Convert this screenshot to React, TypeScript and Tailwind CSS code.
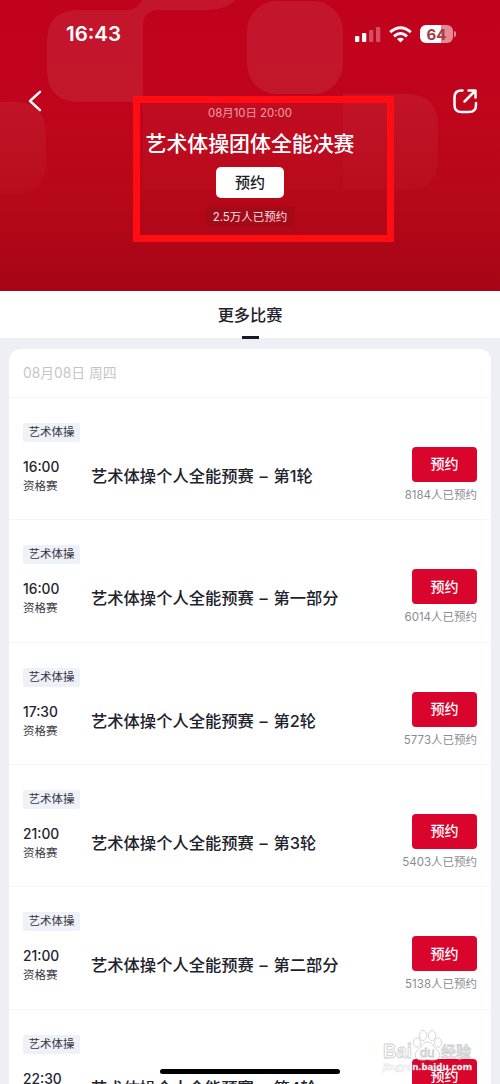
const matches = [
  { time: '16:00', stage: '资格赛', title: '艺术体操个人全能预赛 – 第1轮', booked: '8184人已预约' },
  { time: '16:00', stage: '资格赛', title: '艺术体操个人全能预赛 – 第一部分', booked: '6014人已预约' },
  { time: '17:30', stage: '资格赛', title: '艺术体操个人全能预赛 – 第2轮', booked: '5773人已预约' },
  { time: '21:00', stage: '资格赛', title: '艺术体操个人全能预赛 – 第3轮', booked: '5403人已预约' },
  { time: '21:00', stage: '资格赛', title: '艺术体操个人全能预赛 – 第二部分', booked: '5138人已预约' },
  { time: '22:30', stage: '资格赛', title: '艺术体操个人全能预赛 – 第4轮', booked: '4986人已预约' },
];

type Match = (typeof matches)[number];

// Rounded tiles behind the header
function HeaderPattern() {
  return (
    <svg className="absolute inset-0" width="500" height="291" viewBox="0 0 500 291">
      <defs>
        <linearGradient id="tile" x1="0" y1="94" x2="0" y2="194" gradientUnits="userSpaceOnUse">
          <stop offset="0" stopColor="#c8525a" stopOpacity=".2" />
          <stop offset="1" stopColor="#c8525a" stopOpacity=".06" />
        </linearGradient>
      </defs>
      <g fill="#c8525a" fillOpacity=".24">
        <path d="M78 10H126Q138 10 142 0V-4H238Q230 10 206 10H160Q143 10 143 26V102H80Q47 102 47 70V42Q47 10 78 10Z" />
        <rect x="247" y="1" width="96" height="93" rx="30" />
      </g>
      <g fill="url(#tile)">
        <path d="M343 94H406Q438 94 438 126V158Q438 190 406 190H343Z" />
        <path d="M-5 102H14Q46 102 46 134V162Q46 194 14 194H-5Z" />
        <path d="M143 102H343V190H143Z" opacity=".5" />
      </g>
    </svg>
  );
}

function StatusBar() {
  return (
    <div className="flex h-[68px] items-center justify-between pl-[66px] pr-[44px]">
      <span className="font-['Inter'] text-[20.5px] font-semibold leading-6">16:43</span>
      <div className="flex items-center">
        <svg width="26" height="17" viewBox="0 0 26 17" fill="#fff">
          <rect x="0" y="10" width="4.3" height="6" rx="1" />
          <rect x="7" y="7" width="4.3" height="9" rx="1" />
          <rect x="14" y="4" width="4.3" height="12" rx="1" opacity=".3" />
          <rect x="21" y="1" width="4.3" height="15" rx="1" opacity=".3" />
        </svg>
        <svg className="ml-2" width="23" height="17" viewBox="0 0 23 17" fill="none" stroke="#fff" strokeWidth="2.9">
          <path d="M1.2 6.2Q11.5 -2.7 21.8 6.2" />
          <path d="M5 10.3Q11.5 4.8 18 10.3" />
          <path d="M8 13Q11.5 10.3 15 13L11.5 16.6Z" fill="#fff" stroke="none" />
        </svg>
        <div className="ml-2 flex h-[18px] w-[33px] items-center justify-center rounded-[6px] bg-[linear-gradient(90deg,#fff_64%,#e58a92_64%)] font-['Inter'] text-[15px] font-bold leading-none text-[#a33d45]">
          64
        </div>
        <div className="ml-px h-1.5 w-[2px] rounded-r-full bg-[#e58a92]" />
      </div>
    </div>
  );
}

function Header() {
  return (
    <header className="relative h-[291px] shrink-0 bg-[linear-gradient(180deg,#c1021d_0%,#c1041d_32%,#b80819_65%,#a60517_100%)] text-white">
      <HeaderPattern />
      <div className="relative">
        <StatusBar />
        <div className="flex items-start justify-between pl-[28px] pr-[21px]">
          <svg className="mt-[22px]" width="14" height="22" viewBox="0 0 14 22" fill="none" stroke="#fff" strokeWidth="2.4" strokeLinecap="round" strokeLinejoin="round">
            <path d="M12 1.8L2 11L12 20.2" />
          </svg>
          <svg className="mt-5" width="27" height="27" viewBox="0 0 27 27" fill="none" stroke="#fff" strokeWidth="2.5" strokeLinecap="round" strokeLinejoin="round">
            <path d="M10.5 2.5H9.5Q2.5 2.5 2.5 9.5V17Q2.5 24 9.5 24H17Q24 24 24 17V15" />
            <path d="M12.5 13.5L23.5 2.5M16.5 2.5H23.5V9.5" />
          </svg>
        </div>
      </div>
      {/* Featured match */}
      <div className="absolute left-[133px] top-[96px] flex h-[146px] w-[261px] flex-col items-center border-[7px] border-[#ff0d12] pr-[27px]">
        <p className="mt-[1px] text-[11.4px] leading-[18px] text-[#efa0a4]">08月10日 20:00</p>
        <h1 className="mt-[7px] whitespace-nowrap text-[20.9px] font-medium leading-[30px]">艺术体操团体全能决赛</h1>
        <button className="mt-2 h-[31px] w-[68px] rounded-[5px] bg-white text-[15px] font-medium leading-[30px] text-[#1b1c28]">预约</button>
        <p className="mt-[9px] rounded-[3px] bg-[#a30b19] px-[7px] text-[11.5px] leading-5 text-[#f8dfe0]">2.5万人已预约</p>
      </div>
    </header>
  );
}

function MatchRow({ match }: { match: Match }) {
  return (
    <div className="h-[122.38px] border-t border-[#f5f5f8] px-[14px] pt-[25px]">
      <span className="block h-[19px] w-[57px] rounded-[2px] bg-[#eef1f8] text-center text-[11.5px] leading-[19px] text-[#34353f]">艺术体操</span>
      <div className="mt-[5px] flex items-start">
        <div className="mt-[11px] w-[68px] text-[#24252f]">
          <p className="text-[13.8px] font-medium leading-[19px]">{match.time}</p>
          <p className="text-[11.5px] leading-[19px] text-[#3c3d46]">{match.stage}</p>
        </div>
        <h2 className="mt-[17px] flex-1 whitespace-nowrap text-[16.3px] font-medium leading-6 text-[#20212b] [word-spacing:1.4px]">{match.title}</h2>
        <div className="flex flex-col items-end">
          <button className="h-[35px] w-[65px] rounded-[4px] bg-[#d9052d] text-[14px] font-medium leading-[34px] text-white">预约</button>
          <span className="mt-[5px] whitespace-nowrap text-[11.5px] leading-4 text-[#8b8b91]">{match.booked}</span>
        </div>
      </div>
    </div>
  );
}

function Watermark() {
  return (
    <svg className="absolute left-[380px] top-[1026px]" width="100" height="50" viewBox="0 0 100 50">
      <g fill="#fff" stroke="#cfcfd2" strokeWidth=".9">
        <text x="3" y="32" fontFamily="Liberation Sans" fontWeight="700" fontSize="20" textLength="29" lengthAdjust="spacingAndGlyphs">Bai</text>
        <ellipse cx="37" cy="16.5" rx="3.4" ry="4.6" />
        <ellipse cx="43" cy="9.5" rx="3.6" ry="5" />
        <ellipse cx="52" cy="9.5" rx="3.6" ry="5" />
        <ellipse cx="58" cy="16.5" rx="3.4" ry="4.6" />
        <path d="M47.5 16Q52 16 54 21Q62 27 59 32Q56 35 47.5 33.5Q39 35 36 32Q33 27 41 21Q43 16 47.5 16Z" />
        <text x="40" y="31" fontFamily="Liberation Sans" fontSize="13">du</text>
        <text x="61" y="31" fontFamily="Noto Sans CJK SC" fontWeight="500" fontSize="15">经验</text>
      </g>
      <text x="3" y="44" fontFamily="Open Sans" fontWeight="700" fontSize="9.5" textLength="89" fill="#fff" stroke="#d5d5d8" strokeWidth=".35">jingyan.baidu.com</text>
    </svg>
  );
}

export default function App() {
  return (
    <div className="relative flex h-[1084px] w-[500px] flex-col overflow-hidden bg-[#eeeff4] font-['Inter','Noto_Sans_CJK_SC',sans-serif]">
      <Header />
      <nav className="flex h-[47px] shrink-0 flex-col items-center bg-white">
        <span className="mt-3 text-[16.2px] font-medium leading-6 text-[#20212b]">更多比赛</span>
        <span className="mt-[9px] h-[3px] w-[17px] shrink-0 bg-[#191a25]" />
      </nav>
      <main className="mx-[9px] mt-[10.5px] shrink-0 rounded-t-[12px] bg-white">
        <p className="h-[48.3px] px-[14px] pt-[14px] text-[13.8px] leading-5 text-[#c5c5c8]">08月08日 周四</p>
        {matches.map((match) => (
          <MatchRow key={match.title} match={match} />
        ))}
      </main>
      <div className="absolute left-[160px] top-[1069px] h-[5px] w-[180px] rounded-full bg-black" />
      <Watermark />
    </div>
  );
}
